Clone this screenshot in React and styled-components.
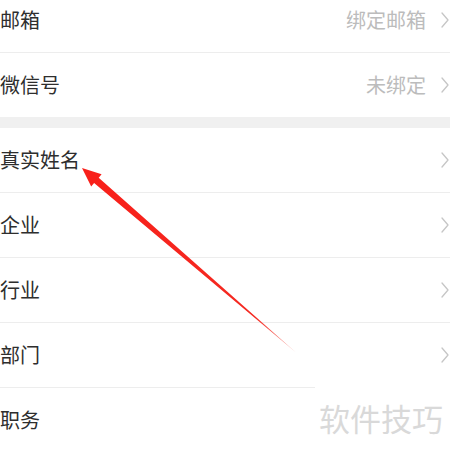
import React from "react";
import styled, { createGlobalStyle } from "styled-components";

const GlobalStyle = createGlobalStyle`
  html, body {
    margin: 0;
    padding: 0;
    background: #ffffff;
    overflow: hidden;
  }
  body {
    font-family: "Noto Sans CJK SC", "Noto Sans", sans-serif;
  }
`;

const Page = styled.div`
  position: relative;
  width: 450px;
  height: 449px;
  overflow: hidden;
  background: #ffffff;
`;

const Group = styled.div`
  display: flex;
  flex-direction: column;
  margin-top: ${(p) => (p.$offset ? `${p.$offset}px` : "0")};
`;

const Band = styled.div`
  height: 11px;
  background: #f0f0f0;
`;

const Row = styled.div`
  display: flex;
  align-items: center;
  justify-content: space-between;
  height: 64px;
  padding: 0 1px 0 0;
  border-bottom: ${(p) => (p.$last ? "none" : "1px solid #ededed")};
  box-sizing: content-box;
`;

const Label = styled.span`
  font-size: 20px;
  line-height: 1;
  color: #2e2e2e;
`;

const Right = styled.div`
  display: flex;
  align-items: center;
  gap: 15px;
`;

const Value = styled.span`
  font-size: 20px;
  line-height: 1;
  color: #bcbcbc;
`;

const Chevron = styled.svg`
  display: block;
  width: 8px;
  height: 16px;
`;

const Watermark = styled.div`
  position: absolute;
  left: 315px;
  top: 381px;
  right: 0;
  bottom: 0;
  background: #ffffff;
  display: flex;
  align-items: center;
  padding: 4px 0 0 4px;
  font-size: 31px;
  line-height: 1;
  color: #d9d9d9;
`;

const ArrowLayer = styled.svg`
  position: absolute;
  left: 0;
  top: 0;
  width: 450px;
  height: 449px;
  pointer-events: none;
`;

const ChevronIcon = () => (
  <Chevron viewBox="0 0 8 16">
    <polyline
      points="1,1 7,8 1,15"
      fill="none"
      stroke="#c6c6c6"
      strokeWidth="1.3"
      strokeLinecap="round"
      strokeLinejoin="round"
    />
  </Chevron>
);

const Item = ({ label, value, last, noChevron }) => (
  <Row $last={last}>
    <Label>{label}</Label>
    <Right>
      {value && <Value>{value}</Value>}
      {!noChevron && <ChevronIcon />}
    </Right>
  </Row>
);

export default function App() {
  return (
    <>
      <GlobalStyle />
      <Page>
        <Group $offset={-12}>
          <Item label="邮箱" value="绑定邮箱" />
          <Item label="微信号" value="未绑定" last />
        </Group>
        <Band />
        <Group>
          <Item label="真实姓名" />
          <Item label="企业" />
          <Item label="行业" />
          <Item label="部门" />
          <Item label="职务" last />
        </Group>
        <ArrowLayer viewBox="0 0 450 449">
          <defs>
            <linearGradient id="shaft" x1="95" y1="178" x2="296" y2="352" gradientUnits="userSpaceOnUse">
              <stop offset="0" stopColor="#f8201a" />
              <stop offset="0.8" stopColor="#f42a22" />
              <stop offset="1" stopColor="#f8b0aa" />
            </linearGradient>
          </defs>
          <polygon points="82,168 101.6,174.3 98.7,177.75 296,352.5 94.1,183.05 91.2,186.5" fill="url(#shaft)" />
        </ArrowLayer>
        <Watermark>软件技巧</Watermark>
      </Page>
    </>
  );
}
